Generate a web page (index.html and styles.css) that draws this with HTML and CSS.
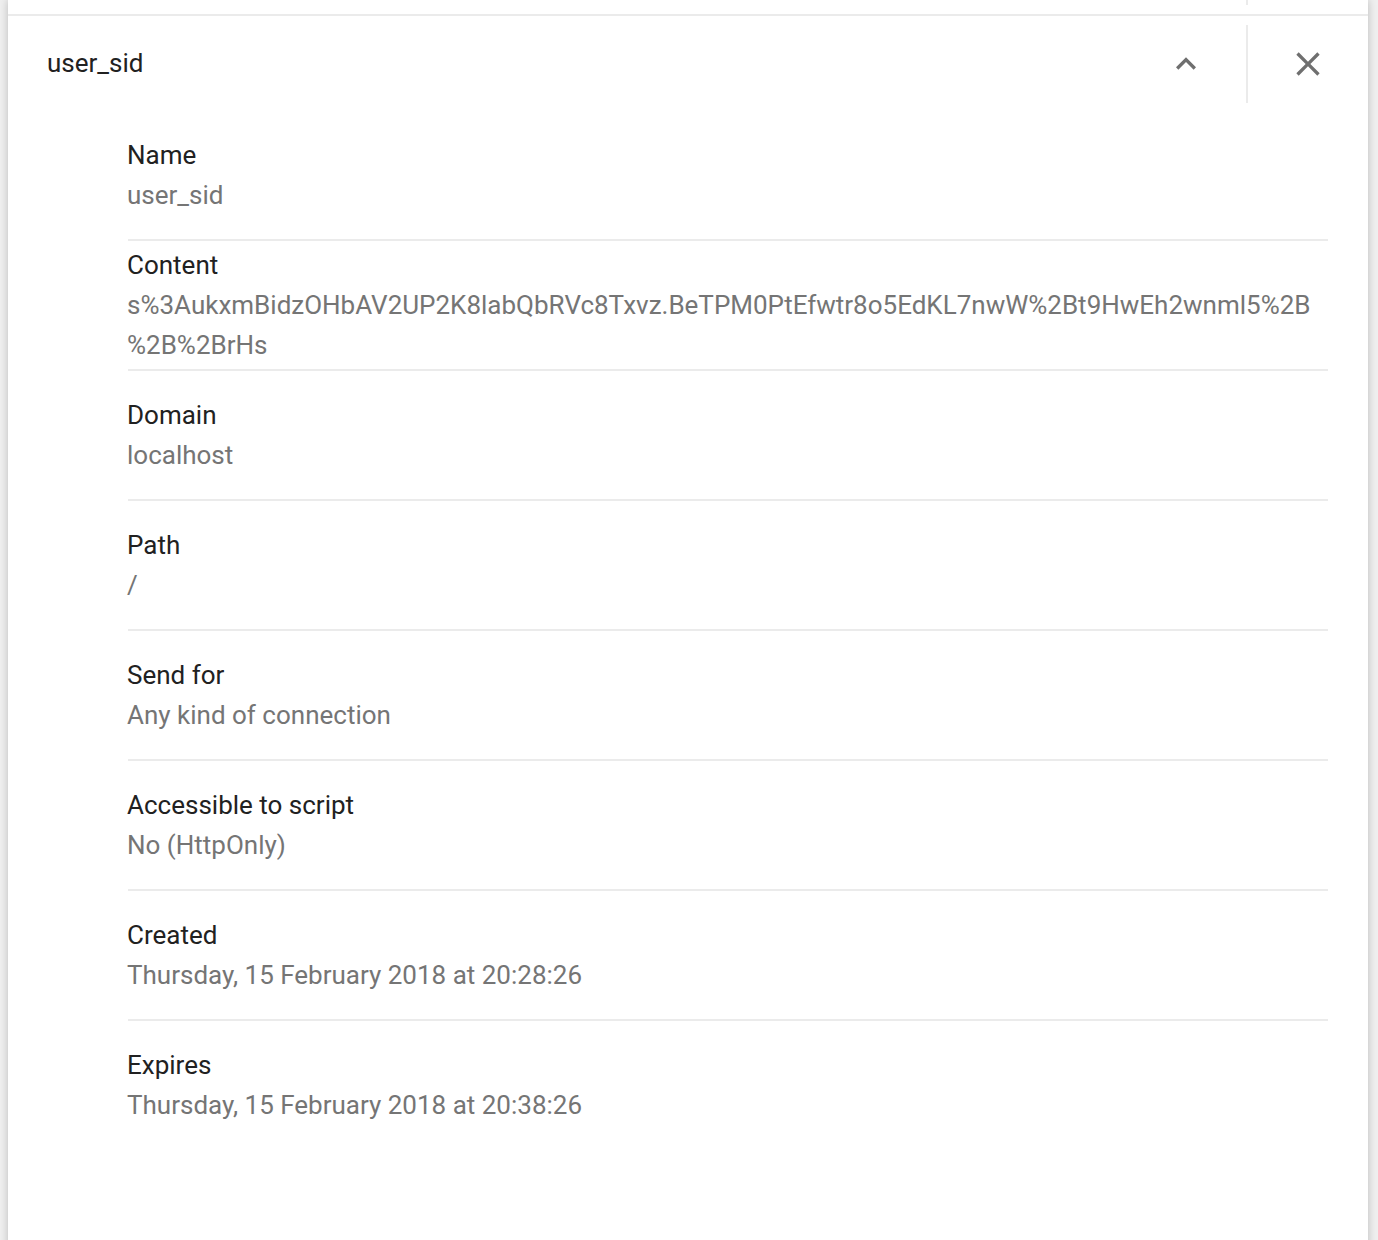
FILE: index.html
```html
<!DOCTYPE html>
<html lang="en">
<head>
<meta charset="utf-8">
<title>Cookie details</title>
<link rel="stylesheet" href="styles.css">
</head>
<body>
<div class="card">
  <div class="prev-row"><div class="prev-sep"></div></div>
  <div class="header">
    <div class="title">user_sid</div>
    <button class="icon-btn" aria-label="Collapse">
      <svg viewBox="0 0 24 24" width="40" height="40"><path d="M12 8l-6 6 1.41 1.41L12 10.83l4.59 4.58L18 14z"/></svg>
    </button>
    <div class="vsep"></div>
    <button class="icon-btn" aria-label="Close">
      <svg viewBox="0 0 24 24" width="40" height="40"><path d="M19 6.41L17.59 5 12 10.59 6.41 5 5 6.41 10.59 12 5 17.59 6.41 19 12 13.41 17.59 19 19 17.59 13.41 12z"/></svg>
    </button>
  </div>
  <div class="rows">
    <div class="row">
      <div class="label">Name</div>
      <div class="value">user_sid</div>
    </div>
    <div class="row">
      <div class="label">Content</div>
      <div class="value">s%3AukxmBidzOHbAV2UP2K8labQbRVc8Txvz.BeTPM0PtEfwtr8o5EdKL7nwW%2Bt9HwEh2wnml5%2B<br>%2B%2BrHs</div>
    </div>
    <div class="row">
      <div class="label">Domain</div>
      <div class="value">localhost</div>
    </div>
    <div class="row">
      <div class="label">Path</div>
      <div class="value">/</div>
    </div>
    <div class="row">
      <div class="label">Send for</div>
      <div class="value">Any kind of connection</div>
    </div>
    <div class="row">
      <div class="label">Accessible to script</div>
      <div class="value">No (HttpOnly)</div>
    </div>
    <div class="row">
      <div class="label">Created</div>
      <div class="value">Thursday, 15 February 2018 at 20:28:26</div>
    </div>
    <div class="row">
      <div class="label">Expires</div>
      <div class="value">Thursday, 15 February 2018 at 20:38:26</div>
    </div>
  </div>
</div>
</body>
</html>
```

FILE: styles.css
```css
html, body {
  margin: 0;
  padding: 0;
}
body {
  background: #efefef;
  font-family: Roboto, "Liberation Sans", Arial, sans-serif;
  height: 1240px;
  overflow: hidden;
}
.card {
  margin: 0 10px 0 8px;
  background: #ffffff;
  min-height: 1300px;
  box-shadow: 0 0 8px rgba(0, 0, 0, 0.22);
}
.prev-row {
  height: 14px;
  border-bottom: 2px solid #ebebeb;
  display: flex;
  justify-content: flex-end;
  padding-right: 120px;
}
.prev-sep {
  width: 2px;
  height: 5px;
  background: #ebebeb;
}
.header {
  height: 95px;
  display: flex;
  align-items: center;
  padding: 0 40px 0 39px;
}
.title {
  flex: 1;
  font-size: 26px;
  color: #212121;
  line-height: 40px;
  padding-bottom: 2px;
}
.icon-btn {
  width: 40px;
  height: 40px;
  padding: 0;
  border: 0;
  background: none;
  display: flex;
  align-items: center;
  justify-content: center;
}
.icon-btn svg {
  fill: #6f6f6f;
  display: block;
}
.vsep {
  width: 2px;
  height: 78px;
  background: #ebebeb;
  margin: 0 40px;
}
.rows {
  margin: 0 40px 0 120px;
}
.row {
  min-height: 128px;
  display: flex;
  flex-direction: column;
  justify-content: center;
  font-size: 26px;
  line-height: 40px;
}
.row + .row {
  border-top: 2px solid #ebebeb;
}
.label {
  color: #212121;
  margin-left: -1px;
}
.value {
  color: #757575;
  margin-left: -1px;
}
```
